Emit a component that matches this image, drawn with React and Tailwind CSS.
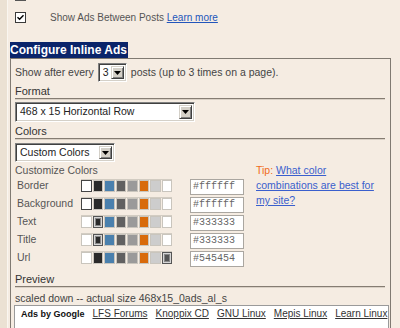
import React from "react";

function Arrow() {
  return (
    <div className="w-[13px] self-stretch my-[2px] mr-[2px] bg-[#d4d0c8] border border-t-[#d4d0c8] border-l-[#d4d0c8] border-r-[#404040] border-b-[#404040] shadow-[inset_1px_1px_0_#ffffff,inset_-1px_-1px_0_#808080] flex items-center justify-center">
      <svg width="7" height="4" viewBox="0 0 7 4">
        <path d="M0 0h7L3.5 4z" fill="#000" />
      </svg>
    </div>
  );
}

function Select({ className, children }) {
  return (
    <div
      className={`flex items-stretch justify-between bg-white border border-t-[#808080] border-l-[#808080] border-r-[#ffffff] border-b-[#ffffff] shadow-[inset_1px_1px_0_#404040,inset_-1px_-1px_0_#d4d0c8] ${className}`}
    >
      <span className="flex items-center pl-[4px] text-[#222]">{children}</span>
      <Arrow />
    </div>
  );
}

function Header({ className, children }) {
  return (
    <div
      className={`h-[16px] border-b border-[#857c72] shadow-[0_1px_0_#d9d0c5] pt-[2px] leading-[13px] text-[11px] text-[#333] mr-[1px] ${className}`}
    >
      {children}
    </div>
  );
}

const COLORS = ["#ffffff", "#2a2a2a", "#4a80ad", "#616161", "#9a9a9a", "#d86a0b", "#cdcdcd", "#ffffff"];

function Swatches({ sel, mode, last }) {
  return (
    <div className="grid grid-cols-8 gap-[1px] w-[91px] border-t border-[#d2ccc2]">
      {COLORS.map((c, i) => {
        const color = i === 7 && last ? last : c;
        if (i === sel && mode === "outline") {
          return <div key={i} className="h-[12px] border border-[#444]" style={{ background: color }} />;
        }
        if (i === sel && mode === "ring") {
          return (
            <div key={i} className="h-[12px] border border-[#555] bg-[#d6d6d6] p-[1px]">
              <div className="w-full h-full border border-[#888]" style={{ background: color }} />
            </div>
          );
        }
        return <div key={i} className="h-[12px] border border-[#c9c5bd]" style={{ background: color }} />;
      })}
    </div>
  );
}

function ColorRow({ label, value, sel, mode, last }) {
  return (
    <div className="flex items-start h-[16px]">
      <div className="w-[66px] pl-[2px] leading-[13px] text-[#555]">{label}</div>
      <Swatches sel={sel} mode={mode} last={last} />
      <div className="ml-[18px] w-[54px] h-[16px] bg-white border border-[#aaa6a0] pl-[2px] font-['Liberation_Mono',monospace] text-[10px] leading-[14px] text-[#666] overflow-hidden">
        {value}
      </div>
    </div>
  );
}

export default function App() {
  return (
    <div className="w-[400px] h-[328px] overflow-hidden bg-[#f5ece2] flex font-['Liberation_Sans',Arial,sans-serif] text-[10.5px] text-[#444]">
      <div className="w-[8px] shrink-0 bg-[#ebe1d3] border-r border-[#faf6f0]" />
      <div className="flex flex-col pl-[2px]">
        <div className="ml-[5px] w-[11px] h-[2px] bg-white border-x border-b border-[#555]" />
        <div className="mt-[11px] flex items-center h-[11px]">
          <div className="ml-[5px] w-[11px] h-[11px] border border-[#3a3a3a] bg-white flex items-center justify-center">
            <svg width="7" height="7" viewBox="0 0 7 7">
              <path d="M0.5 3.2 L2.6 5.3 L6.5 1.2" stroke="#000" strokeWidth="1.4" fill="none" />
            </svg>
          </div>
          <span className="ml-[24px] text-[10px] leading-[11px] text-[#555]">
            Show Ads Between Posts <a className="text-[#2255bb] underline">Learn more</a>
          </span>
        </div>
        <div className="mt-[19px] self-start h-[16px] bg-[#0a246a] text-white font-bold text-[12px] leading-[16px] pr-[1px]">
          Configure Inline Ads
        </div>
        <div className="w-[381px] border border-[#807a72] px-[4px] pt-[4px] flex flex-col">
          <div className="flex items-center h-[19px]">
            <span>Show after every</span>
            <Select className="ml-[4px] w-[29px] h-[19px]">3</Select>
            <span className="ml-[4px]">posts (up to 3 times on a page).</span>
          </div>
          <Header className="mt-[1px]">Format</Header>
          <Select className="mt-[3px] w-[180px] h-[20px]">468 x 15 Horizontal Row</Select>
          <Header className="mt-[1px]">Colors</Header>
          <Select className="mt-[4px] w-[100px] h-[19px]">Custom Colors</Select>
          <div className="mt-[1px] flex">
            <div className="w-[241px] shrink-0 flex flex-col">
              <div className="h-[14px] leading-[14px] text-[#555]">Customize Colors</div>
              <div className="mt-[2px] flex flex-col gap-[2px]">
                <ColorRow label="Border" value="#ffffff" sel={0} mode="outline" />
                <ColorRow label="Background" value="#ffffff" sel={0} mode="outline" />
                <ColorRow label="Text" value="#333333" sel={1} mode="ring" />
                <ColorRow label="Title" value="#333333" sel={1} mode="ring" />
                <ColorRow label="Url" value="#545454" sel={7} mode="ring" last="#545454" />
              </div>
            </div>
            <div className="leading-[15px]">
              <span className="text-[#f06c1a]">Tip: </span>
              <a className="text-[#3a5fcd] underline">
                What color
                <br />
                combinations are best for
                <br />
                my site?
              </a>
            </div>
          </div>
          <Header className="mt-[4px]">Preview</Header>
          <div className="mt-[5px] leading-[13px] text-[#444]">scaled down -- actual size 468x15_0ads_al_s</div>
          <div className="-ml-[1px] w-[375px] h-[30px] bg-white border border-[#9a9a9a] pt-[2px] pl-[6px] flex items-start gap-[8px] text-[10px] leading-[12px] text-[#333] whitespace-nowrap overflow-hidden">
            <span className="font-bold text-[9px] text-[#111]">Ads by Google</span>
            <span className="underline">LFS Forums</span>
            <span className="underline">Knoppix CD</span>
            <span className="underline">GNU Linux</span>
            <span className="underline">Mepis Linux</span>
            <span className="underline">Learn Linux</span>
          </div>
        </div>
      </div>
    </div>
  );
}
